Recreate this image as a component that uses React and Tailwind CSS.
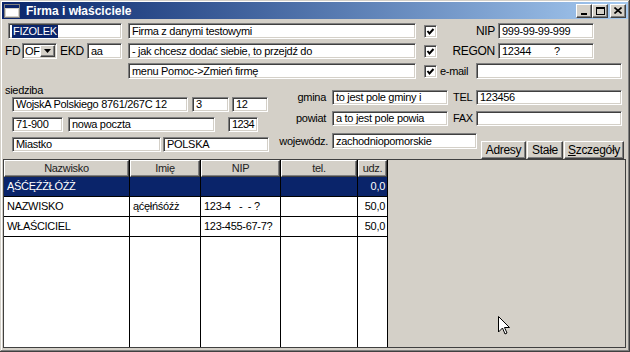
import React from 'react';

const sunken =
  'bg-white border border-t-[#808080] border-l-[#808080] border-r-white border-b-white shadow-[inset_1px_1px_0_#404040,inset_-1px_-1px_0_#d4d0c8]';
const raised =
  'bg-[#d4d0c8] border border-t-white border-l-white border-r-[#404040] border-b-[#404040] shadow-[inset_-1px_-1px_0_#808080]';

const Field = ({ className = '', children }) => (
  <div className={`${sunken} flex items-center pl-[3px] overflow-hidden whitespace-nowrap leading-none ${className}`}>
    {children}
  </div>
);

const Check = ({ className = '' }) => (
  <div className={`${sunken} w-[13px] h-[13px] shrink-0 flex items-center justify-center ${className}`}>
    <svg width="9" height="9" viewBox="0 0 9 9">
      <polyline points="1.5,4 3.5,6.5 7.5,2" fill="none" stroke="#000" strokeWidth="2" />
    </svg>
  </div>
);

const Button = ({ className = '', children }) => (
  <div className={`${raised} h-[18px] flex items-center justify-center text-[12px] leading-none ${className}`}>
    {children}
  </div>
);

const TitleButton = ({ className = '', children }) => (
  <div className={`${raised} w-[16px] h-[14px] flex items-center justify-center ${className}`}>{children}</div>
);

const columns = [
  { title: 'Nazwisko', w: 'w-[126px]', cells: ['ĄŚĆĘŹŻŁÓŹŻ', 'NAZWISKO', 'WŁAŚCICIEL'] },
  { title: 'Imię', w: 'w-[71px]', cells: ['', 'ąćęłńśóźż', ''] },
  { title: 'NIP', w: 'w-[80px]', cells: ['', '123-4   -  - ?', '123-455-67-7?'] },
  { title: 'tel.', w: 'w-[77px]', cells: ['', '', ''] },
  { title: 'udz.', w: 'w-[30px]', cells: ['0,0', '50,0', '50,0'], right: true },
];

export default function App() {
  return (
    <div className="relative w-[630px] h-[352px] overflow-hidden bg-[#d4d0c8] text-black text-[11px] tracking-[-0.3px] font-['Liberation_Sans',Arial,sans-serif] shadow-[inset_-1px_-1px_0_#404040,inset_1px_1px_0_#d4d0c8,inset_-2px_-2px_0_#808080,inset_2px_2px_0_#ffffff]">
      {/* title bar */}
      <div className="mx-[2px] mt-[2px] h-[17px] flex items-center bg-linear-to-r from-[#0a246a] to-[#a6caf0]">
        <svg className="ml-[2px]" width="16" height="14" viewBox="0 0 16 14">
          <rect x="0.5" y="0.5" width="15" height="13" fill="#d4d0c8" stroke="#808080" />
          <rect x="1" y="1" width="14" height="3" fill="#0a246a" />
          <rect x="2" y="5" width="12" height="7" fill="#ffffff" />
        </svg>
        <span className="ml-[6px] text-white font-bold text-[12px] leading-none tracking-normal">Firma i właściciele</span>
        <div className="ml-auto mr-[2px] flex items-center">
          <TitleButton>
            <div className="w-[6px] h-[2px] bg-black mt-[6px] -ml-[1px]" />
          </TitleButton>
          <TitleButton>
            <div className="w-[9px] h-[8px] border border-black border-t-2" />
          </TitleButton>
          <TitleButton className="ml-[2px]">
            <svg width="8" height="7" viewBox="0 0 8 7">
              <path d="M0.5 0.5 L7.5 6.5 M7.5 0.5 L0.5 6.5" stroke="#000" strokeWidth="1.6" />
            </svg>
          </TitleButton>
        </div>
      </div>

      {/* top rows */}
      <div className="mt-[4px] flex flex-col gap-[4px]">
        <div className="flex items-center h-[16px]">
          <Field className="ml-[8px] w-[114px] h-[16px] pl-[1px]">
            <span className="bg-[#0a246a] text-white px-[1px] py-[1px]">FIZOLEK</span>
          </Field>
          <Field className="ml-[6px] w-[288px] h-[16px]">Firma z danymi testowymi</Field>
          <Check className="ml-[8px]" />
          <div className="w-[61px] text-right pr-[3px] text-[12px]">NIP</div>
          <Field className="w-[96px] h-[16px]">999-99-99-999</Field>
        </div>
        <div className="flex items-center h-[16px]">
          <div className="ml-[5px] w-[17px] text-[12px]">FD</div>
          <div className={`${sunken} w-[35px] h-[16px] flex items-center`}>
            <span className="pl-[2px] flex-1">OF</span>
            <div className={`${raised} w-[16px] h-[12px] mr-[1px] flex items-center justify-center`}>
              <svg width="7" height="4" viewBox="0 0 7 4">
                <path d="M0 0 H7 L3.5 4 Z" fill="#000" />
              </svg>
            </div>
          </div>
          <div className="ml-[3px] w-[27px] text-[12px]">EKD</div>
          <Field className="w-[35px] h-[16px]">aa</Field>
          <Field className="ml-[6px] w-[288px] h-[16px]">- jak chcesz dodać siebie, to przejdź do</Field>
          <Check className="ml-[8px]" />
          <div className="w-[61px] text-right pr-[3px] text-[12px]">REGON</div>
          <Field className="w-[96px] h-[16px]">
            12344<span className="ml-[23px]">?</span>
          </Field>
        </div>
        <div className="flex items-center h-[16px]">
          <Field className="ml-[128px] w-[288px] h-[16px]">menu Pomoc-&gt;Zmień firmę</Field>
          <Check className="ml-[8px]" />
          <div className="ml-[3px] w-[36px]">e-mail</div>
          <Field className="w-[146px] h-[16px]" />
        </div>
      </div>

      {/* address block */}
      <div className="flex h-[80px]">
        <div className="w-[272px] flex flex-col">
          <div className="mt-[5px] h-[13px] leading-[13px] pl-[5px]">siedziba</div>
          <div className="flex flex-col gap-[5px] pl-[12px]">
            <div className="flex">
              <Field className="w-[176px] h-[15px]">WojskA Polskiego 8761/267C 12</Field>
              <Field className="ml-[4px] w-[37px] h-[15px]">3</Field>
              <Field className="ml-[3px] w-[36px] h-[15px]">12</Field>
            </div>
            <div className="flex">
              <Field className="w-[51px] h-[15px]">71-900</Field>
              <Field className="ml-[5px] w-[147px] h-[15px]">nowa poczta</Field>
              <Field className="ml-[13px] w-[30px] h-[15px] pl-[1px] tracking-[-0.6px]">1234</Field>
            </div>
            <div className="flex">
              <Field className="w-[149px] h-[15px]">Miastko</Field>
              <Field className="ml-[2px] w-[106px] h-[15px]">POLSKA</Field>
            </div>
          </div>
        </div>
        <div className="flex flex-col pt-[11px]">
          <div className="flex items-center h-[15px]">
            <div className="w-[57px] text-right pr-[3px]">gmina</div>
            <Field className="ml-[3px] w-[116px] h-[15px]">to jest pole gminy i</Field>
            <div className="w-[28px] pl-[5px]">TEL</div>
            <Field className="w-[146px] h-[15px]">123456</Field>
          </div>
          <div className="mt-[6px] flex items-center h-[15px]">
            <div className="w-[57px] text-right pr-[3px]">powiat</div>
            <Field className="ml-[3px] w-[116px] h-[15px]">a to jest pole powia</Field>
            <div className="w-[28px] pl-[5px]">FAX</div>
            <Field className="w-[146px] h-[15px]">&nbsp;</Field>
          </div>
          <div className="mt-[7px] flex items-start">
            <div className="w-[57px] h-[16px] flex items-center justify-end pr-[1px]">wojewódz.</div>
            <Field className="ml-[3px] w-[145px] h-[16px]">zachodniopomorskie</Field>
            <div className="ml-[4px] mt-[8px] flex">
              <Button className="w-[45px]">Adresy</Button>
              <Button className="ml-[1px] w-[36px]">Stałe</Button>
              <Button className="ml-[1px] w-[60px]">
                <span className="underline">S</span>zczegóły
              </Button>
            </div>
          </div>
        </div>
      </div>

      {/* grid */}
      <div className="ml-[3px] w-[623px] h-[189px] border border-[#404040] flex">
        <div className="flex h-full bg-white">
          {columns.map((col) => (
            <div key={col.title} className={`${col.w} h-full border-r border-black flex flex-col`}>
              <div className={`${raised} h-[17px] flex items-center justify-center text-[11px] leading-none text-[#222]`}>
                {col.title}
              </div>
              {col.cells.map((cell, i) => (
                <div
                  key={i}
                  className={`h-[20px] border-b border-black flex items-center whitespace-pre overflow-hidden leading-none ${
                    col.right ? 'justify-end pr-[2px]' : 'pl-[3px]'
                  } ${i === 0 ? 'bg-[#0a246a] text-white' : ''}`}
                >
                  {cell}
                </div>
              ))}
            </div>
          ))}
        </div>
        <div className="flex-1 bg-[#d4d0c8]" />
      </div>

      {/* mouse pointer */}
      <svg className="absolute left-[498px] top-[316px]" width="12" height="19" viewBox="0 0 12 19">
        <path d="M0.5 0.5 V16 L4.5 12 L7 18 L9 17 L6.5 11.5 H11.5 Z" fill="#fff" stroke="#000" strokeWidth="1" />
      </svg>
    </div>
  );
}
